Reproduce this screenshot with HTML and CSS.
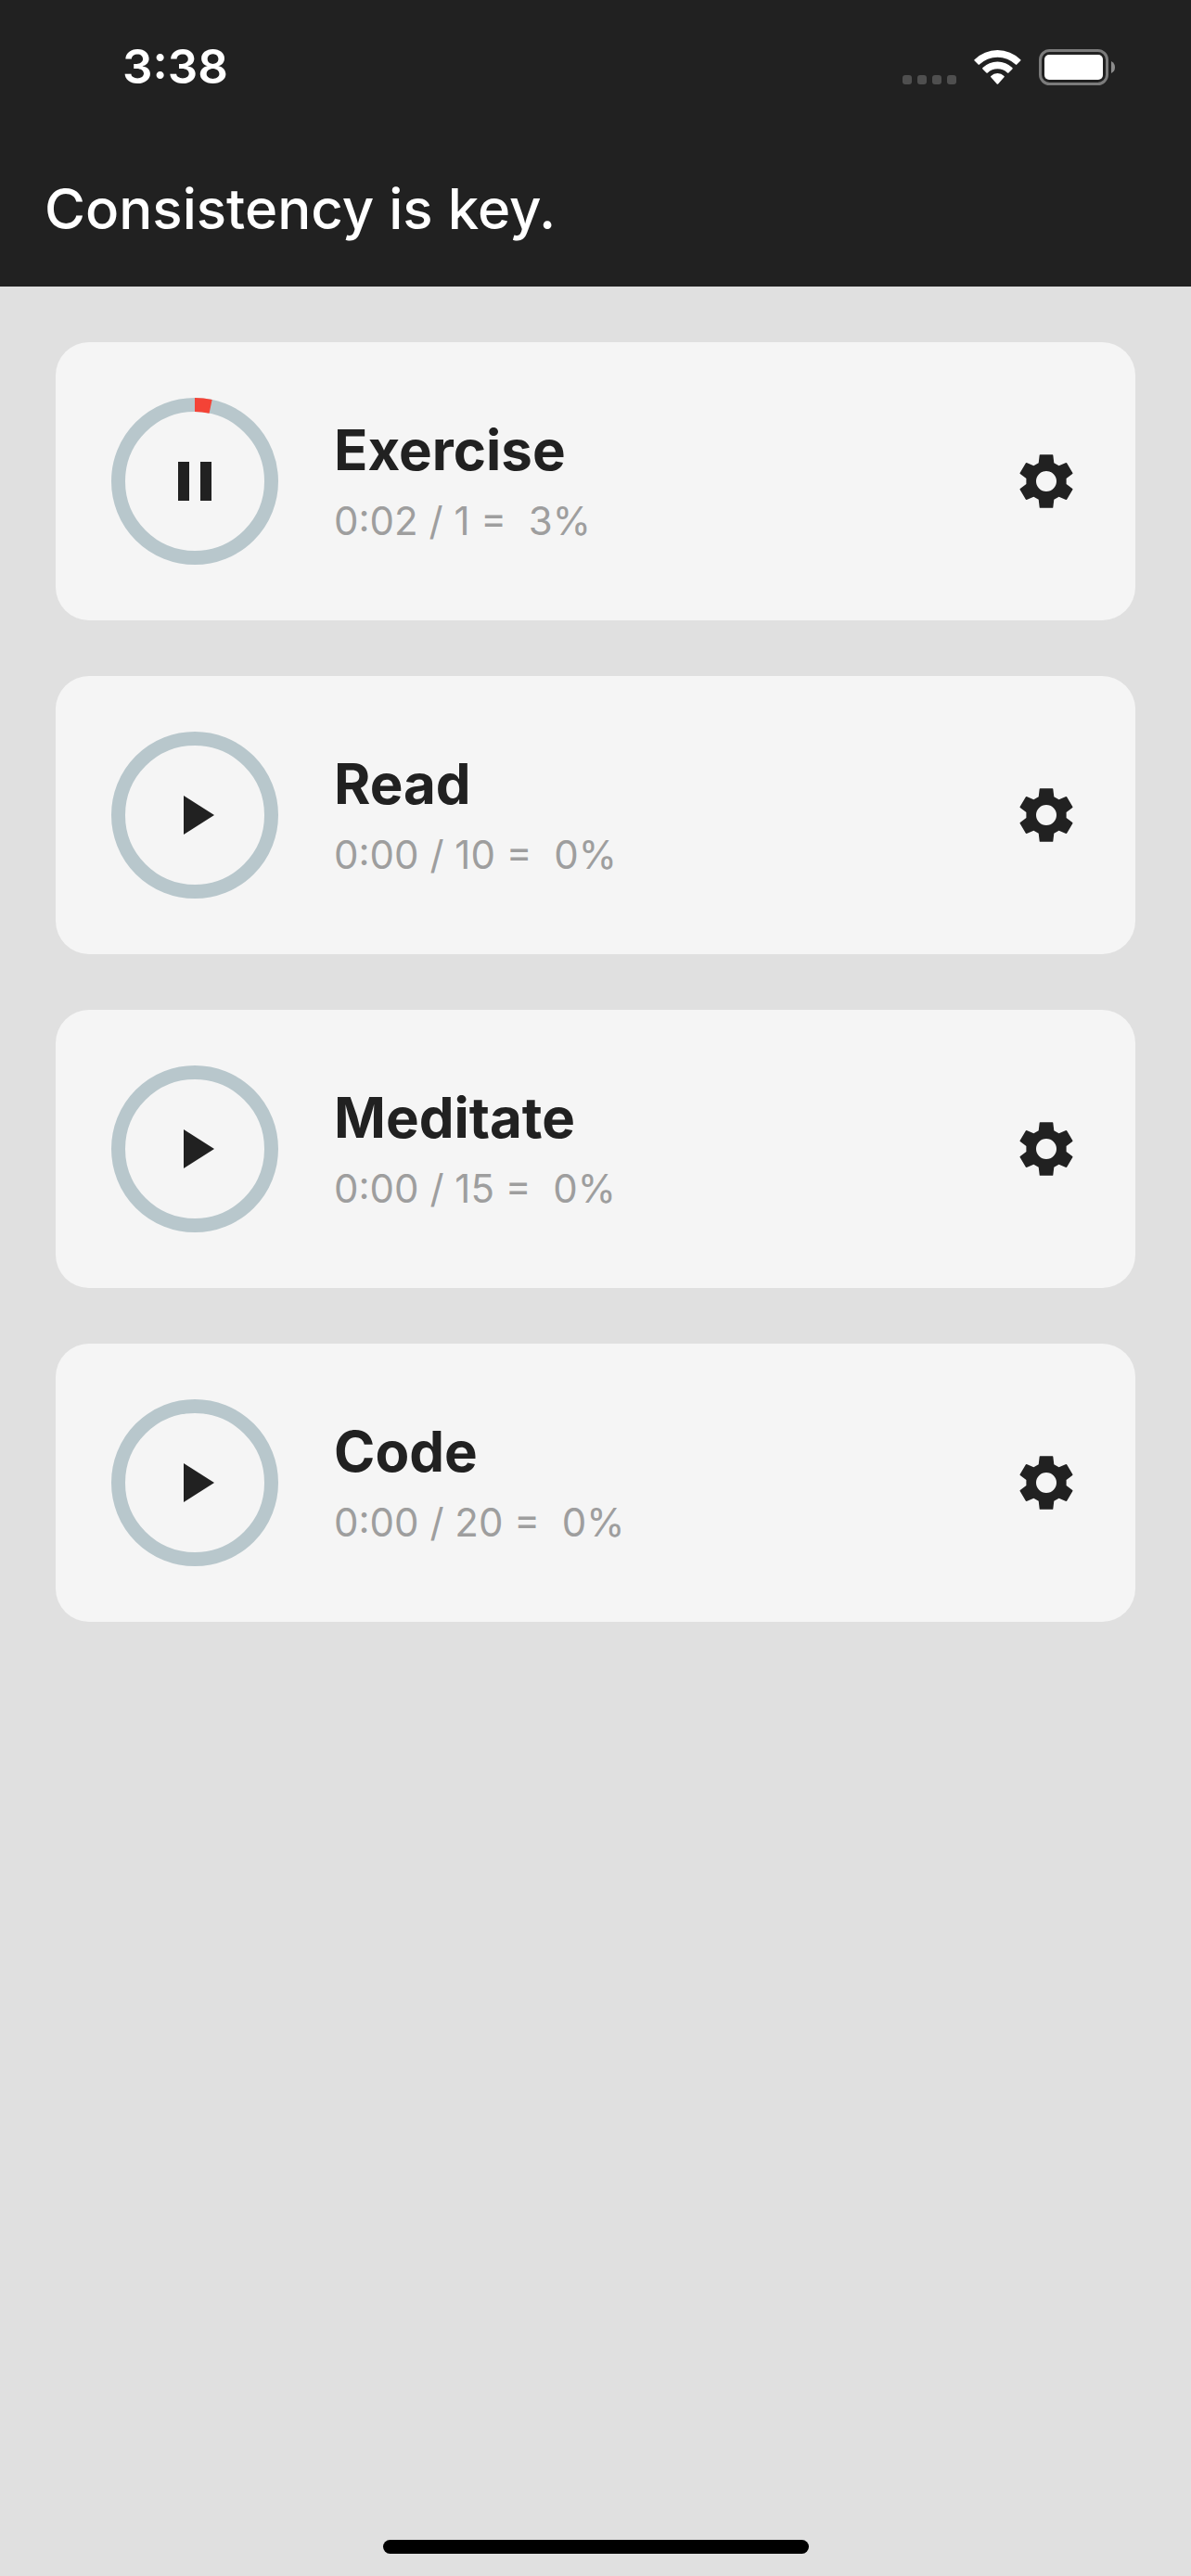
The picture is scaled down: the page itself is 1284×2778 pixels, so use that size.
FILE: index.html
```html
<!DOCTYPE html>
<html lang="en">
<head>
  <meta charset="utf-8">
  <meta name="viewport" content="width=device-width, initial-scale=1">
  <title>Consistency is key.</title>
  <link rel="stylesheet" href="styles.css">
</head>
<body>
  <svg class="sprite" aria-hidden="true">
    <symbol id="play" viewBox="0 0 24 24"><path d="M8 5v14l11-7z"/></symbol>
    <symbol id="pause" viewBox="0 0 24 24"><path d="M6 19h4V5H6v14zm8-14v14h4V5h-4z"/></symbol>
    <symbol id="settings" viewBox="0 0 72 72"><path fill-rule="evenodd" d="M29.4 7.2h13.2q.6 0 .7.6l1 8.500l5.300 3L57.200 16q.6-.2 1 .4l6.200 10.600q.3.600-.2 1L57.600 33v6l6.600 5q.5.400.2 1l-6.200 10.600q-.4.600-1 .4L49.600 52.700l-5.300 3L43.300 64.200q-.1.600-.7.600H29.400q-.6 0-.7-.6l-1-8.500l-5.300-3L14.800 56q-.6.200-1-.4L7.600 45q-.3-.6.2-1L14.400 39v-6L7.800 28q-.5-.4-.2-1l6.200-10.600q.4-.6 1-.4L22.400 19.300l5.300-3L28.700 7.800q.1-.6.700-.6zM36 25a11 11 0 1 0 0 22a11 11 0 1 0 0-22z"/></symbol>
  </svg>

  <header class="header">
    <div class="status">
      <time class="clock">3:38</time>
      <div class="indicators">
        <svg width="58" height="39" viewBox="0 0 58 39" fill="#4f4f4f" aria-label="No signal">
          <rect x="0" y="28" width="10" height="10" rx="3"/>
          <rect x="16" y="28" width="10" height="10" rx="3"/>
          <rect x="32" y="28" width="10" height="10" rx="3"/>
          <rect x="48" y="28" width="10" height="10" rx="3"/>
        </svg>
        <svg width="51" height="39" viewBox="0 0 51 39" fill="#fff" aria-label="Wi-Fi">
          <path d="M.6 11.200a35.500 35.500 0 0 1 49.600 0q.7.700 0 1.400l-4 4q-.6.600-1.300 0a28 28 0 0 0-39 0q-.7.600-1.300 0l-4-4q-.7-.7 0-1.400z"/>
          <path d="M9.400 20a23 23 0 0 1 32 0q.7.700 0 1.400l-4 4q-.7.600-1.400 0a15.500 15.500 0 0 0-21.200 0q-.7.600-1.400 0l-4-4q-.7-.7 0-1.400z"/>
          <path d="M18.300 28.900a10.400 10.400 0 0 1 14.200 0q.7.700 0 1.400l-6.400 7.200q-.7.700-1.400 0l-6.400-7.200q-.7-.7 0-1.400z"/>
        </svg>
        <svg width="82" height="39" viewBox="0 0 82 39" aria-label="Battery full">
          <rect x="1.500" y="1.500" width="72" height="36" rx="10" fill="none" stroke="#7b7b7b" stroke-width="3"/>
          <rect x="6" y="6" width="63" height="27" rx="5" fill="#fff"/>
          <path d="M78 13q4 2 4 6.500t-4 6.500z" fill="#8c8c8c"/>
        </svg>
      </div>
    </div>
    <h1 class="title">Consistency is key.</h1>
  </header>

  <main class="habits">
    <article class="card">
      <button class="timer" type="button" aria-label="Pause Exercise">
        <svg class="ring" viewBox="0 0 180 180">
          <circle class="track" cx="90" cy="90" r="82.500"/>
          <circle class="progress" cx="90" cy="90" r="82.500" pathLength="360" stroke-dasharray="12 360" transform="rotate(-90 90 90)"/>
        </svg>
        <svg class="icon"><use href="#pause"/></svg>
      </button>
      <div class="info">
        <h2 class="name">Exercise</h2>
        <p class="stats">0:02 / 1 =&nbsp; 3%</p>
      </div>
      <button class="settings" type="button" aria-label="Exercise settings"><svg class="icon"><use href="#settings"/></svg></button>
    </article>

    <article class="card">
      <button class="timer" type="button" aria-label="Start Read">
        <svg class="ring" viewBox="0 0 180 180"><circle class="track" cx="90" cy="90" r="82.500"/></svg>
        <svg class="icon"><use href="#play"/></svg>
      </button>
      <div class="info">
        <h2 class="name">Read</h2>
        <p class="stats">0:00 / 10 =&nbsp; 0%</p>
      </div>
      <button class="settings" type="button" aria-label="Read settings"><svg class="icon"><use href="#settings"/></svg></button>
    </article>

    <article class="card">
      <button class="timer" type="button" aria-label="Start Meditate">
        <svg class="ring" viewBox="0 0 180 180"><circle class="track" cx="90" cy="90" r="82.500"/></svg>
        <svg class="icon"><use href="#play"/></svg>
      </button>
      <div class="info">
        <h2 class="name">Meditate</h2>
        <p class="stats">0:00 / 15 =&nbsp; 0%</p>
      </div>
      <button class="settings" type="button" aria-label="Meditate settings"><svg class="icon"><use href="#settings"/></svg></button>
    </article>

    <article class="card">
      <button class="timer" type="button" aria-label="Start Code">
        <svg class="ring" viewBox="0 0 180 180"><circle class="track" cx="90" cy="90" r="82.500"/></svg>
        <svg class="icon"><use href="#play"/></svg>
      </button>
      <div class="info">
        <h2 class="name">Code</h2>
        <p class="stats">0:00 / 20 =&nbsp; 0%</p>
      </div>
      <button class="settings" type="button" aria-label="Code settings"><svg class="icon"><use href="#settings"/></svg></button>
    </article>
  </main>

  <footer class="home"><div class="home-bar"></div></footer>
</body>
</html>
```
FILE: styles.css
```css
* {
  box-sizing: border-box;
  margin: 0;
}

body {
  display: flex;
  flex-direction: column;
  min-height: 100vh;
  background: #e0e0e0;
  color: #212121;
  font-family: Inter, "Liberation Sans", sans-serif;
}

button {
  padding: 0;
  border: 0;
  background: none;
  color: inherit;
  cursor: pointer;
}

svg {
  display: block;
}

.sprite {
  display: none;
}

.header {
  background: #212121;
  color: #fff;
}

.status {
  display: flex;
  align-items: center;
  justify-content: space-between;
  padding: 42px 82px 39px 132px;
}

.clock {
  font-size: 51px;
  font-weight: 600;
  line-height: 60px;
}

.indicators {
  display: flex;
  gap: 19px;
}

.title {
  padding: 48px;
  font-size: 60px;
  font-weight: 500;
  line-height: 72px;
}

.habits {
  display: flex;
  flex: 1;
  flex-direction: column;
  gap: 60px;
  padding: 60px;
}

.card {
  display: flex;
  align-items: center;
  gap: 60px;
  padding: 60px;
  border-radius: 36px;
  background: #f5f5f5;
}

.timer {
  display: grid;
  place-items: center;
  width: 180px;
  height: 180px;
  border-radius: 50%;
}

.timer > * {
  grid-area: 1 / 1;
}

.ring {
  width: 180px;
  height: 180px;
  fill: none;
  stroke-width: 15px;
}

.track {
  stroke: #b8c7cc;
}

.progress {
  stroke: #f44336;
}

.icon {
  width: 72px;
  height: 72px;
  fill: currentColor;
}

.info {
  display: flex;
  flex: 1;
  flex-direction: column;
  gap: 13px;
}

.name {
  font-size: 60px;
  font-weight: 700;
  line-height: 72px;
}

.stats {
  color: #9e9e9e;
  font-size: 42px;
  line-height: 56px;
}

.home {
  display: flex;
  justify-content: center;
  padding-bottom: 24px;
}

.home-bar {
  width: 459px;
  height: 15px;
  border-radius: 8px;
  background: #000;
}
```
